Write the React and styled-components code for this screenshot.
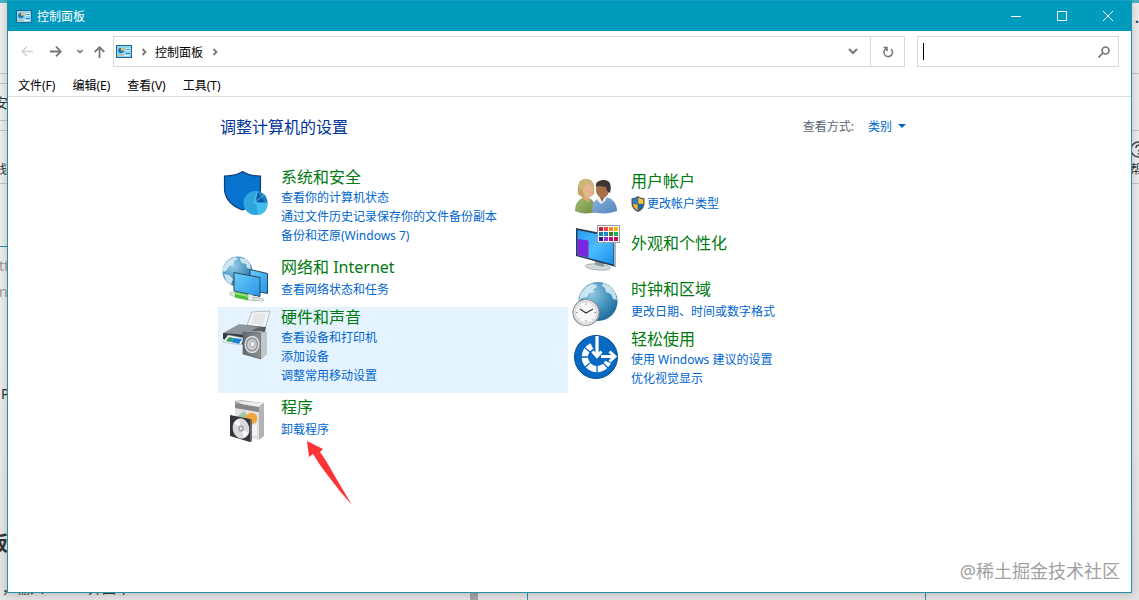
import React from 'react'
import styled, { createGlobalStyle } from 'styled-components'

const GlobalStyle = createGlobalStyle`
* {
  box-sizing: border-box;
}
body {
  margin: 0;
  font-family: "Noto Sans", "Noto Sans CJK SC", sans-serif;
  font-size: 12px;
  background: #dcdcdc;
}
button, input {
  font: inherit;
  color: inherit;
  padding: 0;
  border: 0;
  background: none;
}
svg {
  display: block;
}
`

// Whatever is left visible of the windows behind the control panel
const Desktop = styled.div`
  position: relative;
  min-height: 100vh;
  padding: 0 7px 7px;
  overflow: hidden;
  background: linear-gradient(#4db0c4 0 3px, #ececed 3px 60%, #e2e2e2);
`
const Behind = styled.span`
  position: absolute;
  left: ${props => props.$x};
  top: ${props => props.$y};
  font-size: ${props => props.$size || '14px'};
  font-weight: ${props => props.$bold ? 700 : 400};
  line-height: 20px;
  color: ${props => props.$color || '#333'};
  white-space: nowrap;
`
const BehindBox = styled.span`
  position: absolute;
  left: ${props => props.$x};
  top: ${props => props.$y};
  width: ${props => props.$w};
  height: ${props => props.$h};
  background: ${props => props.$color};
`
const Window = styled.main`
  position: relative;
  display: flex;
  flex-direction: column;
  min-height: calc(100vh - 7px);
  background: white;
  border: 1px solid #2493a5;
  border-top: 0;
  box-shadow: 0 1px 8px rgba(0, 0, 0, .2);
`
const TitleBar = styled.header`
  display: flex;
  align-items: center;
  height: 31px;
  padding-left: 8px;
  gap: 5px;
  color: white;
  background: #009abd;
  border-top: 1px solid #18a2c0;
`
const TitleText = styled.h1`
  flex: 1;
  margin: 0;
  font-size: 12px;
  font-weight: 400;
`
const WindowButtons = styled.div`
  display: flex;
`
const WindowButton = styled.button`
  display: flex;
  align-items: center;
  justify-content: center;
  width: 46px;
  height: 30px;
`
const Toolbar = styled.div`
  display: flex;
  align-items: center;
  padding: 5px 12px 0 9px;
  color: #777;
`
const NavButton = styled.button`
  display: flex;
  align-items: center;
  justify-content: center;
  width: ${props => props.$narrow ? '18px' : '20px'};
  height: 30px;
  margin-right: ${props => props.$gap || '0'};
  color: ${props => props.disabled ? '#d2d2d2' : '#777'};
`
const AddressBar = styled.div`
  display: flex;
  flex: 1;
  align-items: center;
  height: 31px;
  margin-left: 4px;
  padding-left: 2px;
  border: 1px solid #d9d9d9;
`
const Crumb = styled.button`
  color: black;
`
const CrumbArrow = styled.span`
  display: flex;
  justify-content: center;
  width: 23px;
`
const AddressButton = styled.button`
  display: flex;
  align-items: center;
  justify-content: center;
  width: 34px;
  height: 29px;
  margin-left: ${props => props.$push ? 'auto' : '0'};
  border-left: ${props => props.$divided ? '1px solid #d9d9d9' : '0'};
`
const SearchBox = styled.label`
  display: flex;
  align-items: center;
  width: 202px;
  height: 31px;
  margin-left: 12px;
  padding: 0 8px 0 5px;
  border: 1px solid #d9d9d9;
`
const Caret = styled.span`
  width: 1px;
  height: 17px;
  background: black;
`
const SearchInput = styled.input`
  flex: 1;
  min-width: 0;
  outline: 0;
`
const MenuBar = styled.nav`
  display: flex;
  gap: 17px;
  height: 30px;
  padding: 9px 10px 0;
  border-bottom: 1px solid #dadada;
`
const MenuItem = styled.button`
  height: 20px;
  line-height: 20px;
  color: black;
`
const Content = styled.section`
  padding: 17px 213px 0 210px;
`
const Head = styled.div`
  display: flex;
  align-items: center;
  justify-content: space-between;
  height: 24px;
  padding: 0 12px 0 2px;
  margin-bottom: 29px;
`
const Heading = styled.h2`
  margin: 0;
  font-size: 16px;
  font-weight: 400;
  color: #003399;
`
const ViewBy = styled.div`
  display: flex;
  align-items: center;
  gap: 14px;
  color: #5a6675;
`
const ViewButton = styled.button`
  display: flex;
  align-items: center;
  gap: 6px;
  color: #0066cc;
`
const Columns = styled.div`
  display: grid;
  grid-template-columns: 1fr 1fr;
  align-items: start;
`
const Category = styled.article`
  position: relative;
  display: flex;
  gap: 12px;
  min-height: 54px;
  padding: 0 3px;
  background: ${props => props.$active ? '#e5f3ff' : 'transparent'};
`
const CategoryIcon = styled.svg`
  flex: none;
  width: 48px;
  height: 48px;
  margin-top: 3px;
  overflow: visible;
`
const CategoryText = styled.div`
  display: flex;
  flex-direction: column;
  align-items: flex-start;
  gap: ${props => props.$count === 1 ? '2px' : '0'};
  padding: ${props => ['12px 0 0', '4px 0 8px'][props.$count] || '0 0 8px'};
`
const CategoryTitle = styled.a`
  font-size: 16px;
  line-height: 21px;
  color: #007a10;
  text-decoration: none;
`
const TaskLink = styled.a`
  display: flex;
  align-items: center;
  gap: 2px;
  line-height: 19px;
  color: #0066cc;
  text-decoration: none;
`
const Pointer = styled.svg`
  position: absolute;
  left: 88px;
  top: 47px;
`
const Watermark = styled.div`
  position: absolute;
  right: 11px;
  bottom: 8px;
  font-size: 18px;
  line-height: 26px;
  color: #a0a0a0;
`

function PanelIcon() {
  return (
    <svg width="16" height="13" viewBox="0 0 16 13" aria-hidden="true">
      <rect x=".5" y=".5" width="15" height="12" fill="#8fd4f5" stroke="#1c6794" />
      <circle cx="5" cy="5.500" r="2.800" fill="#2476b5" />
      <path d="M5 5.500V2.200A3.200 3.200 0 0 1 8.200 5.500z" fill="#f7c04a" />
      <path d="M10 3h4v3h-4z" fill="#d8f2ff" />
      <path d="M10.500 4.500h3M10 8.500h4" stroke="#2a80b8" />
      <path d="M3 10.500h4" stroke="#f3b23c" />
      <path d="M8 10.500h5" stroke="#e6f7ff" />
    </svg>
  )
}

function Chevron({ down }) {
  return (
    <svg width={down ? 10 : 6} height={down ? 7 : 8} viewBox={down ? '0 0 10 7' : '0 0 6 8'} fill="none" stroke="currentColor" strokeWidth={down ? 2 : 1.8} aria-hidden="true">
      <path d={down ? 'M1 1l4 4 4-4' : 'M1.500 1l3 3-3 3'} />
    </svg>
  )
}

function UacShield() {
  return (
    <svg width="14" height="16" viewBox="0 0 14 16" aria-hidden="true">
      <path d="M7 0C5 1.700 3 2.200 .5 2.200V7c0 4.500 2.500 7 6.500 9 4-2 6.500-4.500 6.500-9V2.200C11 2.200 9 1.700 7 0z" fill="#4b5560" />
      <path d="M6.700 1.500C5 2.800 3.500 3.200 1.700 3.300v4.500h5z" fill="#2f80c9" />
      <path d="M7.300 1.500c1.700 1.300 3.200 1.700 5 1.800v4.500h-5z" fill="#fbc62f" />
      <path d="M1.800 8.300h4.900v6.200C4 13 2.300 11 1.800 8.300z" fill="#f8b51e" />
      <path d="M12.200 8.300H7.300v6.200c2.700-1.500 4.400-3.500 4.900-6.200z" fill="#1d6bb5" />
    </svg>
  )
}

const securityIcon = (
  <>
    <path d="M21.500 1.500C16 5.500 10 6 3.500 6v12c0 10.500 6 17.500 18 22 12-4.500 18-11.500 18-22V6c-6.500 0-12.500-.5-18-4.500z" fill="#0872cf" stroke="#0a3f78" strokeWidth="1.200" />
    <circle cx="34.500" cy="33" r="12" fill="#2fa5dd" />
    <path d="M35 32L36.500 21.200l9 13.300z" fill="#0a5ca9" />
    <path d="M36.500 21.200A12 12 0 0 1 46.500 33l-1 1.500z" fill="#1a7fc6" />
    <path d="M35 33.500l11.400-.5c.8 6-3.400 11.500-9 12z" fill="#43bdec" />
    <path d="M36.500 21.200L33 33l10.500-8.500M33 33l13.400 0" fill="none" stroke="#5fc6ee" strokeWidth=".8" />
  </>
)

const networkIcon = (
  <>
    <defs>
      <radialGradient id="netGlobe" cx=".35" cy=".3" r=".8">
        <stop offset="0" stopColor="#9bd0ea" />
        <stop offset=".6" stopColor="#4a94c0" />
        <stop offset="1" stopColor="#256d9e" />
      </radialGradient>
      <linearGradient id="netScreen" x1="0" y1="0" x2="1" y2="1">
        <stop offset="0" stopColor="#6fcbfa" />
        <stop offset="1" stopColor="#2596e6" />
      </linearGradient>
    </defs>
    <circle cx="16.500" cy="15.500" r="15" fill="url(#netGlobe)" />
    <path d="M4 8l4-4 6-3 3 2-4 2-1 4-4 1-2 4-3 2-2-2zM19 2l6 1 4 5 1 5-4-1-1-4-4-1-2-3zM3 18l5 1 4 4-2 6-5-4z" fill="#dff0f6" opacity=".85" />
    <path d="M29 13.500l17.500 4v20L29 34z" fill="url(#netScreen)" stroke="#26495f" />
    <path d="M13 16.500l26 5v19l-26-5.500z" fill="url(#netScreen)" stroke="#26495f" />
    <path d="M28 42.500l8-2.500 5 3-7 2.500z" fill="#cbd2d5" />
    <path d="M9 36l6 1v4l-6-2zM31 41l12 2-1 2-11-1z" fill="#dfe5e3" stroke="#9ca7a4" strokeWidth=".5" />
    <path d="M14 35.500l13 3v6l-13-3z" fill="#4ebf3d" />
    <path d="M14 36.500l13 3v1.500l-13-3z" fill="#a5e787" />
    <path d="M27 38l5 1v6l-5-1z" fill="#e6efe7" stroke="#8da091" strokeWidth=".5" />
  </>
)

const hardwareIcon = (
  <>
    <defs>
      <linearGradient id="printer" x1="0" y1="0" x2="1" y2="1">
        <stop offset="0" stopColor="#c9cdd0" />
        <stop offset=".5" stopColor="#60676c" />
        <stop offset="1" stopColor="#2c3135" />
      </linearGradient>
      <linearGradient id="speaker">
        <stop offset="0" stopColor="#62696e" />
        <stop offset="1" stopColor="#8b9194" />
      </linearGradient>
    </defs>
    <path d="M31 2l18-1-5 18-18-4z" fill="#f5f5f7" stroke="#a2a5ab" strokeWidth=".7" />
    <path d="M33 4l12-.7-3 12-12-2z" fill="#e3e5e8" />
    <path d="M2 23L18 14l27 3-2 10-20 8L2 27z" fill="url(#printer)" />
    <path d="M4 22l14-7 19 2-13 8z" fill="#8f969b" />
    <path d="M2 23l22 2v10L2 29z" fill="#343a3f" />
    <path d="M7 25l16 3-3 7-18-3z" fill="#f4f7fa" stroke="#9ba1a6" strokeWidth=".5" />
    <path d="M8 27l5 1-3 4-5-1z" fill="#2f9d62" />
    <path d="M13 28l8 1-3 5-8-2z" fill="#2382d6" />
    <path d="M22 22l18-1 6 3v20l-6 5-18-5z" fill="#b3b7b9" />
    <path d="M22 22l18 1v26l-18-5z" fill="url(#speaker)" stroke="#4d5357" strokeWidth=".6" />
    <path d="M40 23l6-2v23l-6 5z" fill="#c2c5c7" />
    <ellipse cx="31" cy="34.500" rx="7.500" ry="8.800" fill="#d9dcde" />
    <ellipse cx="31" cy="34.500" rx="6" ry="7" fill="#858c91" />
    <ellipse cx="31" cy="34.500" rx="4.800" ry="5.800" fill="#c8ccce" />
    <ellipse cx="31.500" cy="34" rx="2.200" ry="2.800" fill="#f4f4f4" stroke="#777e82" strokeWidth=".5" />
  </>
)

const programsIcon = (
  <>
    <path d="M14 5l24 3v36l-24-6z" fill="#e1e1e0" />
    <path d="M38 9l5-2v33l-5 4z" fill="#b3b3b3" />
    <path d="M14 5l6-1 23 3v7l-5 2-24-4z" fill="#b8b6b7" />
    <path d="M14 7l24 4v5l-24-4z" fill="#888688" />
    <path d="M16 5l5 3 17 3 4-4z" fill="#eeeced" />
    <path d="M16 21l7-6 6 7-4 6z" fill="#a3c8a1" />
    <circle cx="30.500" cy="22.500" r="5.800" fill="#f2a63a" />
    <path d="M29 30l7-2v11l-7 2z" fill="#f4f4f4" />
    <path d="M9 19l20 4 2 1v21l-2 1-20-6z" fill="#33363a" />
    <path d="M29 23l2 1v21l-2 1z" fill="#696d70" />
    <ellipse cx="20" cy="32.500" rx="8.300" ry="10.300" fill="#d8dadd" transform="rotate(-12 20 32.500)" />
    <path d="M20 33l-7-6 5-4zM20 33l8 4-5 5z" fill="#f8f8fa" />
    <ellipse cx="20" cy="32.500" rx="2.800" ry="3.200" fill="#a0a5a7" />
    <circle cx="20" cy="32.500" r="1.200" fill="#f0f0f0" />
  </>
)

const usersIcon = (
  <>
    <defs>
      <linearGradient id="greenShirt" x1="0" y1="0" x2="1" y2="1">
        <stop offset="0" stopColor="#a6bf6e" />
        <stop offset="1" stopColor="#6b8c43" />
      </linearGradient>
      <linearGradient id="blueShirt" x1="0" y1="0" x2="1" y2="1">
        <stop offset="0" stopColor="#8cb5dc" />
        <stop offset="1" stopColor="#5484bd" />
      </linearGradient>
    </defs>
    <path d="M4 41c0-8 4-13 11-14 6 1 10 6 10 15-7 2-15 2-21-1z" fill="url(#greenShirt)" />
    <path d="M7 24C6 15 8 9 15 9c7 0 9 5 8 15l-4 3h-8z" fill="#bda263" />
    <path d="M11 26l6-1 2 8-8-5z" fill="#dfa47b" />
    <ellipse cx="17" cy="19.500" rx="5.500" ry="7.500" fill="#e5b58c" />
    <path d="M8 20c4-1 6-4 8-7 2 2 4 3 7 4-1-6-4-8-8-8-5 0-8 4-7 11z" fill="#c8b777" />
    <path d="M21 42c0-9 3-14 11-15 9 0 14 6 14 14-7 3-18 3-25 1z" fill="url(#blueShirt)" />
    <path d="M27 26l9 0-2 5-4 3-4-4z" fill="#eef2f5" />
    <path d="M28 25l7-1-4 8z" fill="#905b39" />
    <ellipse cx="31.500" cy="19.500" rx="6.500" ry="8.500" fill="#a66f48" />
    <path d="M25 17c-1-5 3-7 8-7 6 0 8 5 6 13l-3-2-1-4c-3 0-7-2-10 0z" fill="#3d3633" />
  </>
)

const swatches = [
  ['#c8213b', '#ee4654', '#f58a18', '#fbb515'],
  ['#0b7db8', '#1688c9', '#427b14', '#16b45b'],
  ['#3a118c', '#8a35c5', '#c60a83', '#c50b4c'],
]

const appearanceIcon = (
  <>
    <defs>
      <linearGradient id="screen" x1="0" y1="0" x2="1" y2="1">
        <stop offset="0" stopColor="#269cf1" />
        <stop offset=".5" stopColor="#4ebcff" />
        <stop offset="1" stopColor="#168ee9" />
      </linearGradient>
    </defs>
    <ellipse cx="27" cy="43" rx="12.500" ry="3" transform="rotate(5 27 43)" fill="#d3dade" stroke="#737d85" strokeWidth=".5" />
    <path d="M24 36l9 2v5l-9-2z" fill="#919ba2" />
    <path d="M5 4l40 8v31L5 32z" fill="#273a4e" />
    <path d="M6.500 6l36 7.500v27L6.500 31z" fill="url(#screen)" />
    <path d="M6.500 15l11 1.500v17l-11-2.500z" fill="#7b26dd" />
    <path d="M43 12l2 .5V43l-2-1z" fill="#aab6be" />
    <rect x="26.500" y="1.500" width="22" height="17" fill="white" stroke="#999ba7" />
    {swatches.map((row, y) => row.map((color, x) => (
      <rect key={color} x={28 + x * 5} y={3 + y * 5} width="4" height="4" fill={color} />
    )))}
  </>
)

const clockIcon = (
  <>
    <defs>
      <radialGradient id="clockGlobe" cx=".35" cy=".3" r=".8">
        <stop offset="0" stopColor="#94c9e3" />
        <stop offset=".6" stopColor="#3b8cb8" />
        <stop offset="1" stopColor="#1c6490" />
      </radialGradient>
    </defs>
    <circle cx="27" cy="23.500" r="19.500" fill="url(#clockGlobe)" />
    <path d="M10 15l5-6 6-3 5 1-1 3-3 1 1 3-5 1-2 4-5 1-3 3zM32 5l7 3 5 6 2 8-4-1-2-5-5-2-1-4-3-2z" fill="#ddf0f7" opacity=".85" />
    <circle cx="15" cy="34.500" r="13" fill="#e6e8e9" stroke="#8e9396" strokeWidth="1.200" />
    <circle cx="15" cy="34.500" r="10.800" fill="#f7f7f6" stroke="#c0c3c5" strokeWidth=".7" />
    <path d="M15 25v2M15 42v2M5 34.500h2M23 34.500h2M8 27.500l1 1M21 40.500l1 1M22 27.500l-1 1M8 41.500l1-1" stroke="#888" strokeWidth=".8" />
    <path d="M9 31l6 4 7-4" fill="none" stroke="#303538" strokeWidth="1.200" />
  </>
)

const easeIcon = (
  <>
    <circle cx="25" cy="25" r="21.500" fill="#0869c3" stroke="#074c91" />
    <path d="M20.900 14.100A12 12 0 1 0 36.900 30" fill="none" stroke="white" strokeWidth="6.500" />
    <path d="M13 15l6 5M9 25h9M13 36l6-5M26 41v-9M38 37l-6-6" stroke="#0869c3" strokeWidth="1.300" />
    <circle cx="26" cy="25" r="8.700" fill="#0869c3" />
    <path d="M26 4v18M30 24.500h12" fill="none" stroke="white" strokeWidth="3.200" />
    <path d="M21.500 19.500l4.500 5 4.500-5M38.500 19.500l5.500 5-5.500 5" fill="none" stroke="white" strokeWidth="3" />
  </>
)

const leftCategories = [
  { title: '系统和安全', icon: securityIcon, links: ['查看你的计算机状态', '通过文件历史记录保存你的文件备份副本', '备份和还原(Windows 7)'] },
  { title: '网络和 Internet', icon: networkIcon, links: ['查看网络状态和任务'] },
  { title: '硬件和声音', icon: hardwareIcon, links: ['查看设备和打印机', '添加设备', '调整常用移动设置'], active: true },
  { title: '程序', icon: programsIcon, links: ['卸载程序'], pointed: true },
]
const rightCategories = [
  { title: '用户帐户', icon: usersIcon, links: ['更改帐户类型'], shield: true },
  { title: '外观和个性化', icon: appearanceIcon, links: [] },
  { title: '时钟和区域', icon: clockIcon, links: ['更改日期、时间或数字格式'] },
  { title: '轻松使用', icon: easeIcon, links: ['使用 Windows 建议的设置', '优化视觉显示'] },
]

function CategoryItem(props) {
  const { item } = props

  return (
    <Category $active={ item.active }>
      <CategoryIcon viewBox="0 0 48 48" aria-hidden="true">{ item.icon }</CategoryIcon>
      <CategoryText $count={ item.links.length }>
        <CategoryTitle href="#">{ item.title }</CategoryTitle>
        { item.links.map(link => (
          <TaskLink href="#" key={ link }>{ item.shield && <UacShield /> }{ link }</TaskLink>
        )) }
      </CategoryText>
      { item.pointed &&
        <Pointer width="48" height="66" viewBox="0 0 48 66" aria-hidden="true">
          <path d="M1 1l16 8-3 3q6 8 13 21 10 17 19 32-13-14-23-28Q14 26 7 14l-4 3z" fill="#fb3535" />
        </Pointer>
      }
    </Category>
  )
}

export default function App() {
  return (
    <Desktop>
      <GlobalStyle />
      <div aria-hidden="true">
        <BehindBox $x="0" $y="73px" $w="100%" $h="1px" $color="#c4c4c4" />
        <BehindBox $x="0" $y="83px" $w="8px" $h="1px" $color="#c4c4c4" />
        <BehindBox $x="0" $y="120px" $w="8px" $h="1px" $color="#c4c4c4" />
        <BehindBox $x="0" $y="130px" $w="100%" $h="1px" $color="#c4c4c4" />
        <BehindBox $x="0" $y="183px" $w="100%" $h="1px" $color="#c4c4c4" />
        <BehindBox $x="0" $y="246px" $w="8px" $h="1px" $color="#2493a5" />
        <BehindBox $x="470px" $y="590px" $w="8px" $h="10px" $color="#a3a3a3" />
        <BehindBox $x="527px" $y="590px" $w="1px" $h="10px" $color="#2493a5" />
        <BehindBox $x="925px" $y="590px" $w="1px" $h="10px" $color="#2493a5" />
        <Behind $x="-6px" $y="93px">安</Behind>
        <Behind $x="-5px" $y="160px" $size="12px">线</Behind>
        <Behind $x="-1px" $y="256px" $color="#999">tt</Behind>
        <Behind $x="-1px" $y="282px" $color="#999">n</Behind>
        <Behind $x="1px" $y="384px">P</Behind>
        <Behind $x="-12px" $y="534px" $size="20px" $bold>板</Behind>
        <Behind $x="2px" $y="578px">，输入</Behind>
        <Behind $x="88px" $y="578px">并回车</Behind>
        <Behind $x="calc(100% - 4px)" $y="12px" $bold>·</Behind>
        <Behind $x="calc(100% - 9px)" $y="141px">
          <svg width="17" height="17" viewBox="0 0 17 17" fill="none" stroke="#444" strokeWidth="1.500"><circle cx="8.500" cy="8.500" r="7.500" /><path d="M6 7c0-3.500 5-3.500 5-.5 0 2-2.500 2-2.500 4M8.500 12v1.500" /></svg>
        </Behind>
        <Behind $x="calc(100% - 9px)" $y="160px" $size="12px">帮</Behind>
      </div>
      <Window>
        <TitleBar>
          <PanelIcon />
          <TitleText>控制面板</TitleText>
          <WindowButtons>
            <WindowButton aria-label="最小化">
              <svg width="10" height="10" viewBox="0 0 10 10" stroke="white"><path d="M0 5.500h10" /></svg>
            </WindowButton>
            <WindowButton aria-label="最大化">
              <svg width="10" height="10" viewBox="0 0 10 10" fill="none" stroke="white"><path d="M.5 .5h9v9h-9z" /></svg>
            </WindowButton>
            <WindowButton aria-label="关闭">
              <svg width="10" height="10" viewBox="0 0 10 10" stroke="white"><path d="M0 0l10 10M10 0L0 10" /></svg>
            </WindowButton>
          </WindowButtons>
        </TitleBar>
        <Toolbar>
          <NavButton disabled aria-label="后退" $gap="9px">
            <svg width="12" height="11" viewBox="0 0 12 11" fill="none" stroke="currentColor" strokeWidth="1.500"><path d="M12 5.500H1M6 .7L1.200 5.500 6 10.300" /></svg>
          </NavButton>
          <NavButton aria-label="前进" $gap="5px">
            <svg width="12" height="11" viewBox="0 0 12 11" fill="none" stroke="currentColor" strokeWidth="1.800"><path d="M0 5.500h11M6 .7l4.800 4.800L6 10.300" /></svg>
          </NavButton>
          <NavButton aria-label="最近浏览的位置" $narrow>
            <svg width="6" height="5" viewBox="0 0 6 5" fill="none" stroke="currentColor" strokeWidth="1.600"><path d="M.5 1L3 3.500 5.500 1" /></svg>
          </NavButton>
          <NavButton aria-label="上移">
            <svg width="11" height="12" viewBox="0 0 11 12" fill="none" stroke="currentColor" strokeWidth="1.800"><path d="M5.500 12V1M.7 6l4.800-4.800L10.300 6" /></svg>
          </NavButton>
          <AddressBar>
            <PanelIcon />
            <CrumbArrow><Chevron /></CrumbArrow>
            <Crumb>控制面板</Crumb>
            <CrumbArrow><Chevron /></CrumbArrow>
            <AddressButton $push aria-label="以前的位置"><Chevron down /></AddressButton>
            <AddressButton $divided aria-label="刷新">
              <svg width="12" height="12" viewBox="0 0 12 12" fill="none" stroke="currentColor" strokeWidth="1.600"><path d="M9 3A4.300 4.300 0 1 1 4 2.600M1.500 1.500h3.500v3.800" /></svg>
            </AddressButton>
          </AddressBar>
          <SearchBox>
            <Caret />
            <SearchInput type="text" aria-label="搜索控制面板" />
            <svg width="12" height="12" viewBox="0 0 12 12" fill="none" stroke="currentColor" strokeWidth="1.700" aria-hidden="true"><circle cx="7.500" cy="4.500" r="3.500" /><path d="M5 7L.5 11.500" /></svg>
          </SearchBox>
        </Toolbar>
        <MenuBar>
          <MenuItem>文件(F)</MenuItem>
          <MenuItem>编辑(E)</MenuItem>
          <MenuItem>查看(V)</MenuItem>
          <MenuItem>工具(T)</MenuItem>
        </MenuBar>
        <Content>
          <Head>
            <Heading>调整计算机的设置</Heading>
            <ViewBy>
              <span>查看方式:</span>
              <ViewButton>
                类别
                <svg width="8" height="4" viewBox="0 0 8 4" fill="currentColor" aria-hidden="true"><path d="M0 0h8L4 4z" /></svg>
              </ViewButton>
            </ViewBy>
          </Head>
          <Columns>
            <div>{ leftCategories.map(item => <CategoryItem item={ item } key={ item.title } />) }</div>
            <div>{ rightCategories.map(item => <CategoryItem item={ item } key={ item.title } />) }</div>
          </Columns>
        </Content>
        <Watermark>@稀土掘金技术社区</Watermark>
      </Window>
    </Desktop>
  )
}
